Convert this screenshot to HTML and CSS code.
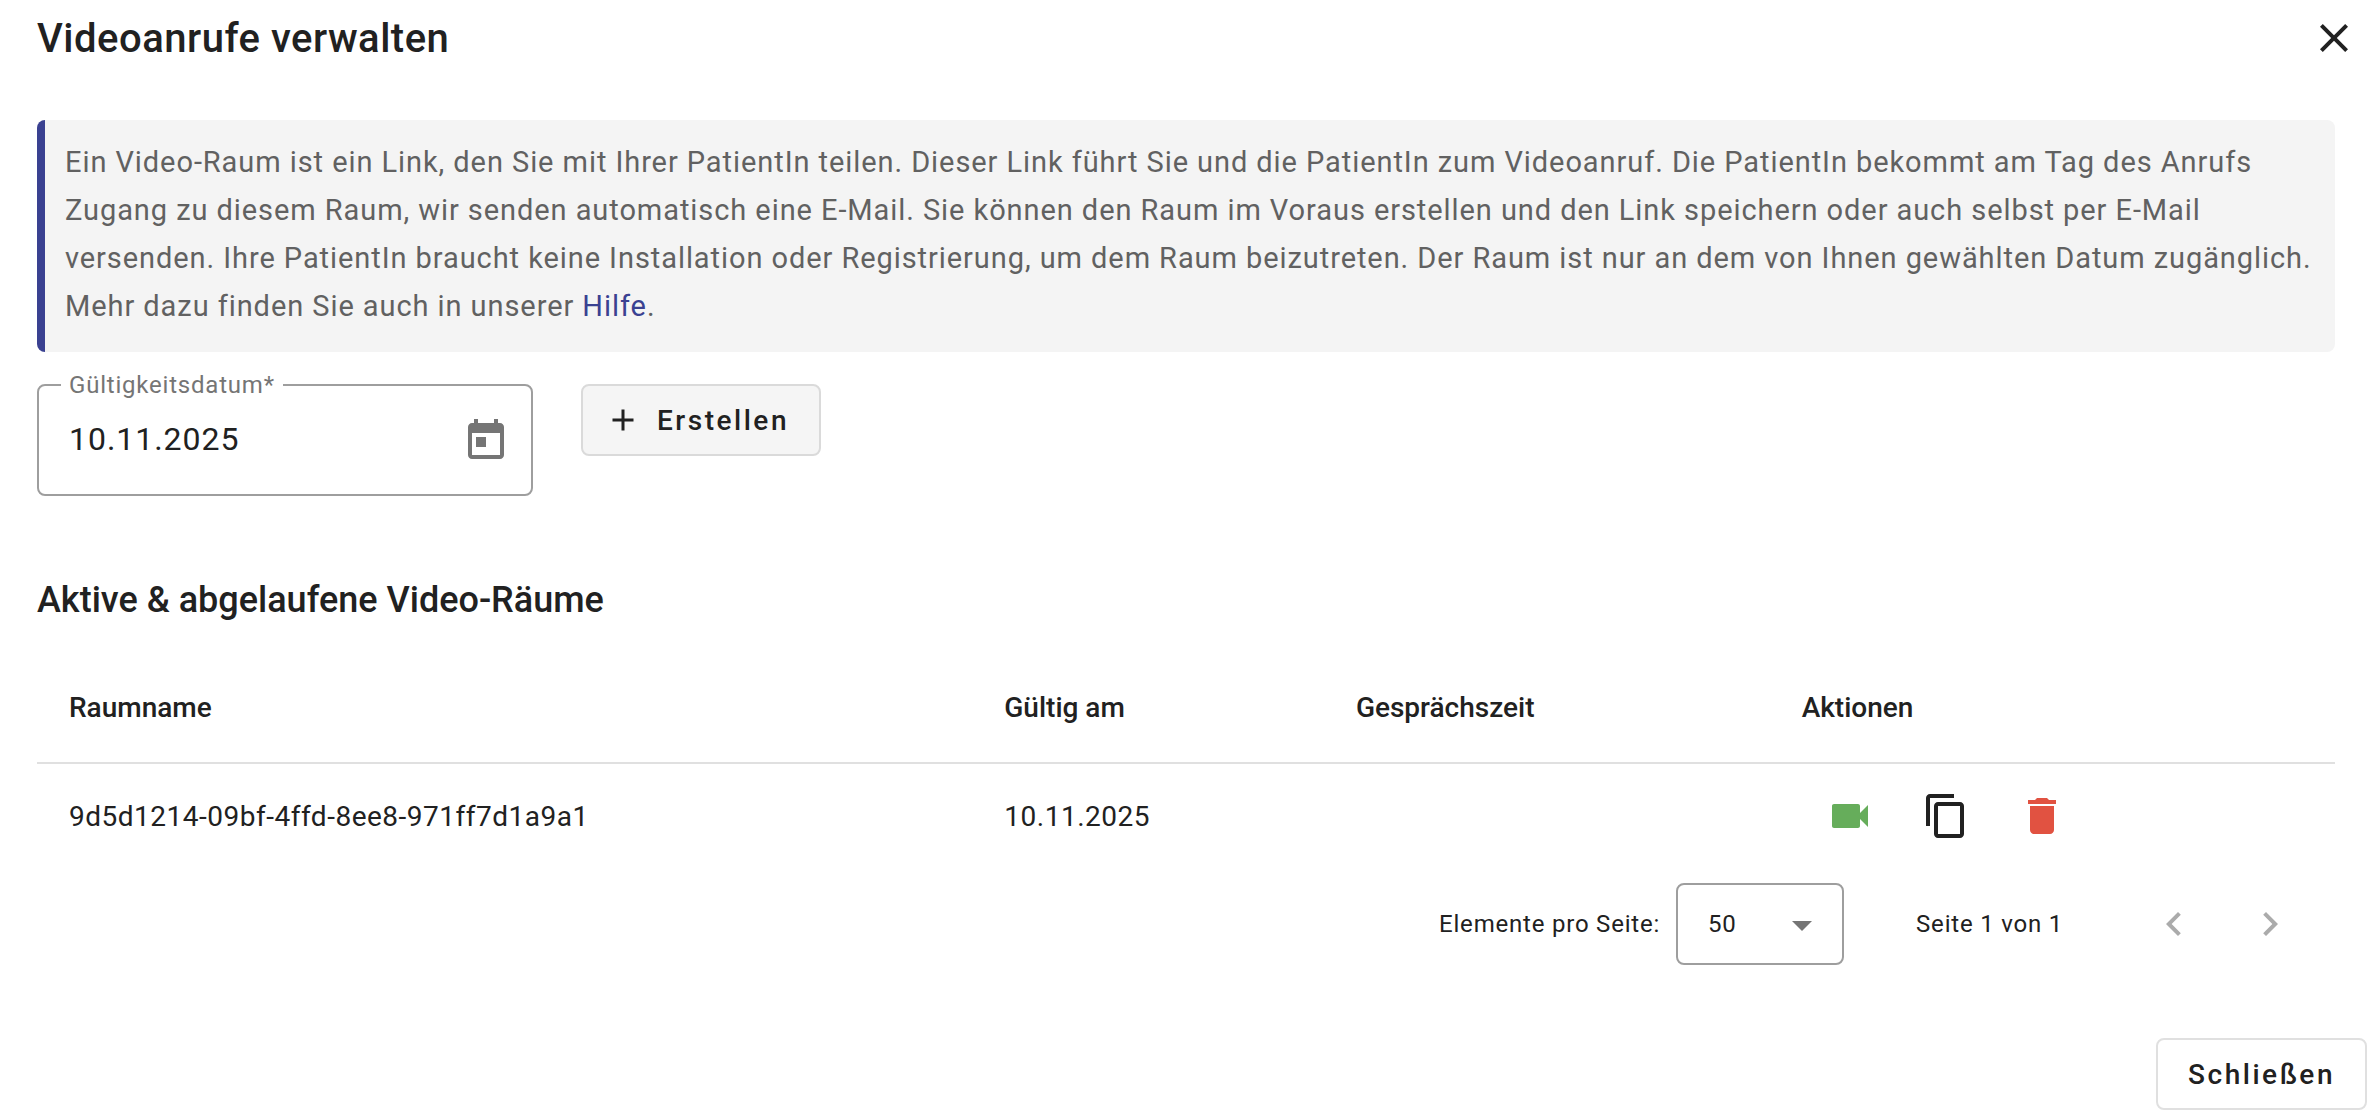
FILE: index.html
```html
<!DOCTYPE html>
<html lang="de">
<head>
  <meta charset="utf-8">
  <meta name="viewport" content="width=device-width, initial-scale=1">
  <title>Videoanrufe verwalten</title>
  <link rel="stylesheet" href="styles.css">
</head>
<body>
  <main class="dialog">
    <header class="dialog-header">
      <h1 class="dialog-title">Videoanrufe verwalten</h1>
      <button class="icon-button close-button" type="button" aria-label="Dialog schließen">
        <svg class="icon" viewBox="0 0 24 24"><path d="M19 6.41L17.59 5 12 10.59 6.41 5 5 6.41 10.59 12 5 17.59 6.41 19 12 13.41 17.59 19 19 17.59 13.41 12z"/></svg>
      </button>
    </header>

    <div class="dialog-content">
      <p class="info">Ein Video-Raum ist ein Link, den Sie mit Ihrer PatientIn teilen. Dieser Link führt Sie und die PatientIn zum Videoanruf. Die PatientIn bekommt am Tag des Anrufs Zugang zu diesem Raum, wir senden automatisch eine E-Mail. Sie können den Raum im Voraus erstellen und den Link speichern oder auch selbst per E-Mail versenden. Ihre PatientIn braucht keine Installation oder Registrierung, um dem Raum beizutreten. Der Raum ist nur an dem von Ihnen gewählten Datum zugänglich. Mehr dazu finden Sie auch in unserer <a class="info-link" href="#hilfe">Hilfe</a>.</p>

      <form class="create-form">
        <div class="date-field">
          <label class="date-label" for="valid-date">Gültigkeitsdatum*</label>
          <input class="date-input" id="valid-date" type="text" value="10.11.2025" required>
          <button class="icon-button calendar-button" type="button" aria-label="Kalender öffnen">
            <svg class="icon" viewBox="0 0 24 24"><path d="M19 3h-1V1h-2v2H8V1H6v2H5c-1.11 0-1.99.9-1.99 2L3 19c0 1.1.89 2 2 2h14c1.1 0 2-.9 2-2V5c0-1.1-.9-2-2-2zm0 16H5V8h14v11zM7 10h5v5H7z"/></svg>
          </button>
        </div>
        <button class="button button-create" type="button">
          <svg class="icon-small" viewBox="0 0 24 24"><path d="M19 13h-6v6h-2v-6H5v-2h6V5h2v6h6v2z"/></svg>
          <span>Erstellen</span>
        </button>
      </form>

      <h2 class="section-title">Aktive &amp; abgelaufene Video-Räume</h2>

      <table class="rooms">
        <colgroup>
          <col class="col-name">
          <col class="col-date">
          <col class="col-time">
          <col class="col-actions">
        </colgroup>
        <thead>
          <tr>
            <th scope="col">Raumname</th>
            <th scope="col">Gültig am</th>
            <th scope="col">Gesprächszeit</th>
            <th scope="col">Aktionen</th>
          </tr>
        </thead>
        <tbody>
          <tr>
            <td>9d5d1214-09bf-4ffd-8ee8-971ff7d1a9a1</td>
            <td>10.11.2025</td>
            <td></td>
            <td>
              <div class="actions">
                <button class="icon-button action-call" type="button" aria-label="Videoanruf starten">
                  <svg class="icon" viewBox="0 0 24 24"><path d="M17 10.5V7c0-.55-.45-1-1-1H4c-.55 0-1 .45-1 1v10c0 .55.45 1 1 1h12c.55 0 1-.45 1-1v-3.5l4 4v-11l-4 4z"/></svg>
                </button>
                <button class="icon-button" type="button" aria-label="Link kopieren">
                  <svg class="icon" viewBox="0 0 24 24"><path d="M16 1H4c-1.1 0-2 .9-2 2v14h2V3h12V1zm3 4H8c-1.1 0-2 .9-2 2v14c0 1.1.9 2 2 2h11c1.1 0 2-.9 2-2V7c0-1.1-.9-2-2-2zm0 16H8V7h11v14z"/></svg>
                </button>
                <button class="icon-button action-delete" type="button" aria-label="Raum löschen">
                  <svg class="icon" viewBox="0 0 24 24"><path d="M6 19c0 1.1.9 2 2 2h8c1.1 0 2-.9 2-2V7H6v12zM19 4h-3.5l-1-1h-5l-1 1H5v2h14V4z"/></svg>
                </button>
              </div>
            </td>
          </tr>
        </tbody>
      </table>

      <nav class="paginator" aria-label="Seiten">
        <label for="page-size">Elemente pro Seite:</label>
        <div class="page-size">
          <select class="page-size-select" id="page-size">
            <option>50</option>
          </select>
          <svg class="select-arrow" viewBox="0 0 20 10"><path d="M0 0h20L10 10z"/></svg>
        </div>
        <span class="page-status">Seite 1 von 1</span>
        <div class="page-buttons">
          <button class="icon-button" type="button" aria-label="Vorherige Seite" disabled>
            <svg class="icon" viewBox="0 0 24 24"><path d="M15.41 7.41L14 6l-6 6 6 6 1.41-1.41L10.83 12z"/></svg>
          </button>
          <button class="icon-button" type="button" aria-label="Nächste Seite" disabled>
            <svg class="icon" viewBox="0 0 24 24"><path d="M10 6L8.59 7.41 13.17 12l-4.58 4.59L10 18l6-6z"/></svg>
          </button>
        </div>
      </nav>
    </div>

    <footer class="dialog-footer">
      <button class="button" type="button">Schließen</button>
    </footer>
  </main>
</body>
</html>
```

FILE: styles.css
```css
* {
  box-sizing: border-box;
}

body {
  margin: 0;
  background: #fff;
  color: #212121;
  font-family: Roboto, "Liberation Sans", sans-serif;
  font-size: 28px;
}

button,
input,
select {
  margin: 0;
  color: inherit;
  font: inherit;
}

.icon {
  display: block;
  width: 48px;
  height: 48px;
  fill: currentColor;
}

.icon-small {
  width: 36px;
  height: 36px;
  fill: currentColor;
}

.icon-button {
  display: flex;
  align-items: center;
  justify-content: center;
  width: 96px;
  height: 96px;
  padding: 0;
  border: 0;
  background: none;
}

.icon-button:disabled {
  color: #ababab;
}

.button {
  display: flex;
  align-items: center;
  gap: 16px;
  height: 72px;
  padding: 0 30px;
  border: 2px solid #e0e0e0;
  border-radius: 8px;
  background: #fff;
  font-weight: 500;
  letter-spacing: 0.09em;
}

.button-create {
  padding-left: 22px;
  border-color: #dadada;
  background: #f5f5f5;
}

.dialog-header {
  display: flex;
  align-items: center;
  justify-content: space-between;
  height: 76px;
  padding: 0 14px 0 37px;
}

.dialog-title {
  margin: 0;
  font-size: 40px;
  font-weight: 500;
  letter-spacing: 0.0125em;
}

.close-button {
  width: 48px;
  height: 48px;
}

.dialog-content {
  padding: 44px 37px 0;
}

.info {
  margin: 0;
  padding: 18px 20px 22px;
  border-left: 8px solid #3a4191;
  border-radius: 8px;
  background: #f4f4f4;
  color: #616161;
  font-size: 29px;
  line-height: 48px;
  letter-spacing: 0.032em;
}

.info-link {
  color: #3a4191;
  text-decoration: none;
}

.create-form {
  display: flex;
  align-items: flex-start;
  gap: 48px;
  margin-top: 32px;
}

.date-field {
  position: relative;
  display: flex;
  align-items: center;
  width: 496px;
  height: 112px;
  padding: 0 21px 0 30px;
  border: 2px solid #9e9e9e;
  border-radius: 8px;
}

.date-label {
  position: absolute;
  top: -17px;
  left: 22px;
  padding: 0 8px;
  background: #fff;
  color: #757575;
  font-size: 24px;
  line-height: 32px;
  letter-spacing: 0.033em;
}

.date-input {
  flex: 1;
  min-width: 0;
  padding: 0 0 2px;
  border: 0;
  background: none;
  font-size: 32px;
  letter-spacing: 0.03em;
}

.calendar-button {
  width: 48px;
  height: 50px;
  padding-top: 2px;
  color: #757575;
}

.section-title {
  margin: 80px 0 26px;
  font-size: 36px;
  font-weight: 500;
  line-height: 48px;
}

.rooms {
  width: 100%;
  border-collapse: separate;
  border-spacing: 0;
  table-layout: fixed;
}

.col-name {
  width: 40.7%;
}

.col-date {
  width: 15.3%;
}

.col-time {
  width: 19.4%;
}

.rooms th,
.rooms td {
  padding: 0 32px;
  text-align: left;
}

.rooms th {
  height: 114px;
  padding-top: 2px;
  border-bottom: 2px solid #e0e0e0;
  font-weight: 500;
}

.rooms td {
  height: 104px;
  letter-spacing: 0.018em;
}

.actions {
  display: flex;
}

.action-call {
  color: #66ad5b;
}

.action-delete {
  color: #e15241;
}

.paginator {
  display: flex;
  align-items: center;
  justify-content: flex-end;
  height: 112px;
  padding-right: 17px;
  font-size: 24px;
  letter-spacing: 0.033em;
}

.page-size {
  position: relative;
  margin: 0 72px 0 16px;
}

.page-size-select {
  display: block;
  width: 168px;
  height: 82px;
  padding: 0 30px;
  border: 2px solid #9e9e9e;
  border-radius: 8px;
  background: #fff;
  letter-spacing: inherit;
  appearance: none;
}

.select-arrow {
  position: absolute;
  top: 38px;
  right: 32px;
  width: 20px;
  height: 10px;
  fill: #757575;
  pointer-events: none;
}

.page-buttons {
  display: flex;
  margin-left: 63px;
}

.dialog-footer {
  display: flex;
  justify-content: flex-end;
  padding: 58px 5px 6px;
}
```
